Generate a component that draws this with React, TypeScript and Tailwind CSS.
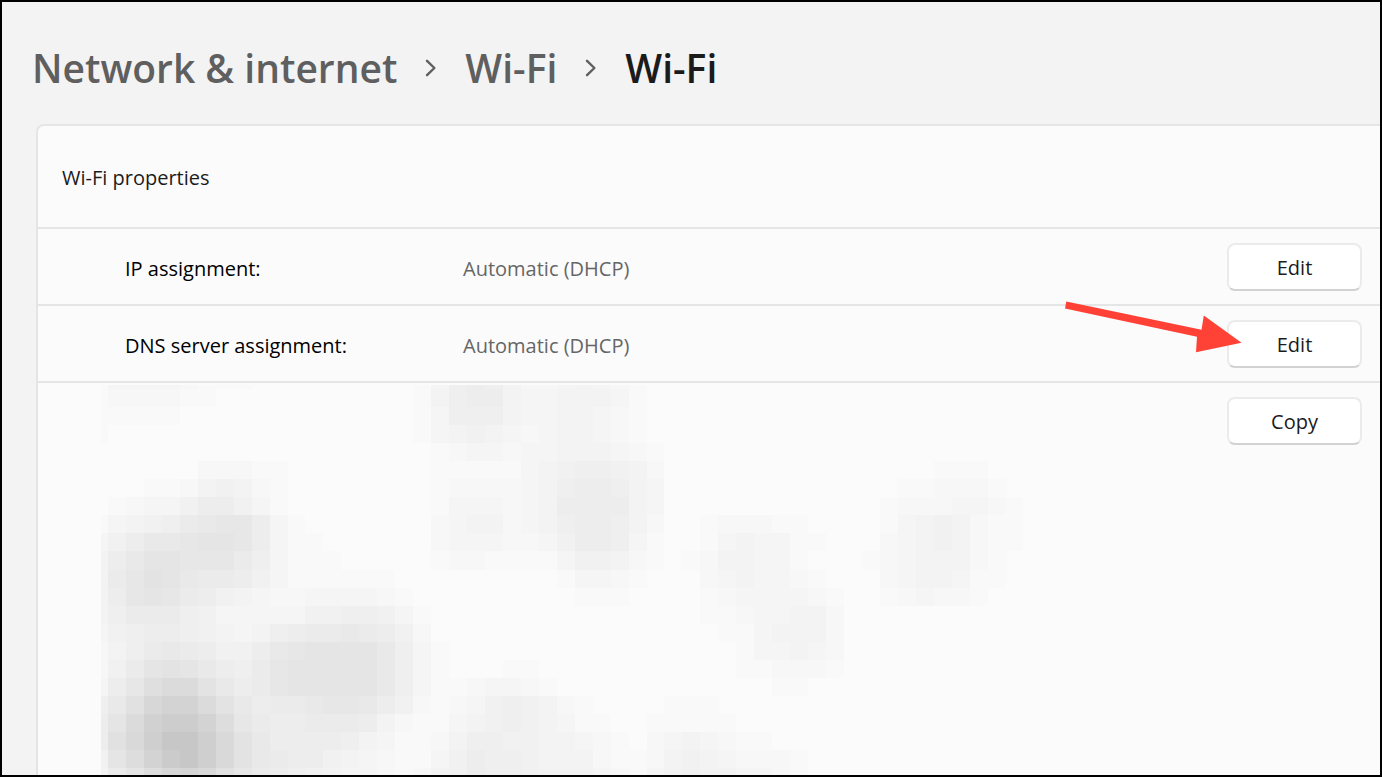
type Setting = {
  id: string;
  label: string;
  value: string;
  pointed?: boolean;
};

const settings: Setting[] = [
  { id: "ip", label: "IP assignment:", value: "Automatic (DHCP)" },
  {
    id: "dns",
    label: "DNS server assignment:",
    value: "Automatic (DHCP)",
    pointed: true,
  },
];

// Mosaic rows: runs of [first column, shades], one base 36 digit per cell
const mosaic: [number, string][][] = [
  [[0, "1333321110"], [17, "01367642234321"]],
  [[0, "1222211"], [18, "1467743344431"]],
  [[0, "11111"], [18, "1366643344321"]],
  [[0, "1"], [18, "1345432344321"]],
  [[19, "1233233444321"]],
  [[6, "22211"], [19, "1111134566542"], [47, "111"]],
  [[3, "11245421"], [19, "1222234677643"], [45, "112221"]],
  [[1, "12335775310"], [19, "1333234777743"], [44, "12223321"]],
  [[0, "1345689aa731"], [19, "2344234677642"], [34, "122211"], [44, "13454211"]],
  [[0, "35799abba7311"], [19, "2333223577631"], [34, "1343311"], [44, "23454211"]],
  [[0, "479bbaaa863111"], [19, "1221111355421"], [33, "1244331"], [43, "12344421"]],
  [[0, "48acb988753111111"], [26, "13321"], [34, "2343321"], [44, "2344311"]],
  [[0, "47aba8754322333321"], [27, "111"], [34, "12333321"], [44, "123221"]],
  [[0, "4688865333335566531"], [34, "11233442"]],
  [[0, "3567765434678898752"], [35, "1134442"]],
  [[0, "24689875579abbbb9631"], [36, "133432"]],
  [[0, "258bcb9768abbbbb9631"], [23, "11"], [36, "112221"]],
  [[0, "37aeggc978abbbbb9631123321"], [38, "11"]],
  [[0, "69dikkgc97889aa9752123565421"], [32, "111"]],
  [[0, "7bglnnkfa87788874211345654311"], [31, "11111"]],
  [[0, "7dhmqqmhc977776431124665544321"], [31, "2343211"]],
  [[0, "5bfkoqmhc9877543211357665444211"], [31, "245432221"]],
  [[0, "48bfijhda8765433212457665444321"], [31, "345443321"]],
];

// The first column and row are cut off by the edge of the mosaic
const columnX = (col: number) => (col === 0 ? 0 : Math.round(7 + (col - 1) * 17.95));
const rowY = (row: number) => (row === 0 ? 0 : Math.round(4 + (row - 1) * 18.05));

const Chevron = () => (
  <svg width="12" height="18" viewBox="0 0 12 18" fill="none" className="shrink-0">
    <path
      d="M2 1.8 9.4 9 2 16.2"
      stroke="#5f5f5f"
      strokeWidth="2.4"
      strokeLinecap="round"
      strokeLinejoin="round"
    />
  </svg>
);

const Mosaic = () => (
  <svg
    width="922"
    height="390"
    viewBox="0 0 922 390"
    shapeRendering="crispEdges"
    aria-hidden="true"
    className="shrink-0"
  >
    {mosaic.map((runs, row) =>
      runs.map(([start, shades]) =>
        shades.split("").map((shade, i) => {
          const col = start + i;
          const level = 251 - parseInt(shade, 36) * 2;
          return (
            <rect
              key={`${row}-${col}`}
              x={columnX(col)}
              y={rowY(row)}
              width={columnX(col + 1) - columnX(col)}
              height={rowY(row + 1) - rowY(row)}
              fill={`rgb(${level}, ${level}, ${level})`}
            />
          );
        })
      )
    )}
  </svg>
);

const Arrow = () => (
  <svg
    width="180"
    height="56"
    viewBox="0 0 180 56"
    aria-hidden="true"
    className="pointer-events-none absolute -top-2 right-[136px]"
  >
    <path d="M2.3 3.6 1 10.4 133 38.8 132 54.2 177.5 44.7 139.8 17.4 137.5 31.8Z" fill="#ff4136" />
  </svg>
);

const ActionButton = ({ text, label }: { text: string; label: string }) => (
  <button
    type="button"
    aria-label={label}
    className="h-12 w-[135px] shrink-0 rounded-lg border-2 border-[#ebebeb] border-b-[#d2d2d2] bg-white pt-0.5 text-xl text-[#1b1b1b]"
  >
    {text}
  </button>
);

const App = () => {
  return (
    <main className="min-h-screen overflow-hidden border-2 border-black bg-[#f3f3f3] pl-[34px] font-['Open_Sans','Noto_Sans',sans-serif]">
      {/* BREADCRUMB */}
      <nav className="-ml-1 flex h-[122px] items-center gap-7 pt-2.5 text-[39px] font-semibold text-[#5f5f5f]">
        <a href="#network">Network & internet</a>
        <Chevron />
        <a href="#wifi">Wi-Fi</a>
        <Chevron />
        <h1 className="text-[#1b1b1b]">Wi-Fi</h1>
      </nav>
      {/* PROPERTIES */}
      <section className="rounded-tl-lg border-l-2 border-t-2 border-[#e5e5e5] bg-[#fbfbfb] text-xl">
        <h2 className="flex h-[101px] items-center pl-6 pt-0.5 text-[#1b1b1b]">
          Wi-Fi properties
        </h2>
        {settings.map((item) => (
          <div
            key={item.id}
            className="relative flex h-[77px] items-center border-t-2 border-[#e5e5e5] pl-[87px] pr-[18px]"
          >
            <span className="w-[338px] pt-1 text-black">{item.label}</span>
            <span className="flex-1 pt-1 text-[#666666]">{item.value}</span>
            <ActionButton text="Edit" label={`Edit ${item.label}`} />
            {item.pointed && <Arrow />}
          </div>
        ))}
        <div className="flex items-start justify-between border-t-2 border-[#e5e5e5] pl-[63px] pr-[18px]">
          <div className="flex pt-0.5">
            <Mosaic />
          </div>
          <div className="flex pt-3.5">
            <ActionButton text="Copy" label="Copy properties" />
          </div>
        </div>
      </section>
    </main>
  );
};

export default App;
